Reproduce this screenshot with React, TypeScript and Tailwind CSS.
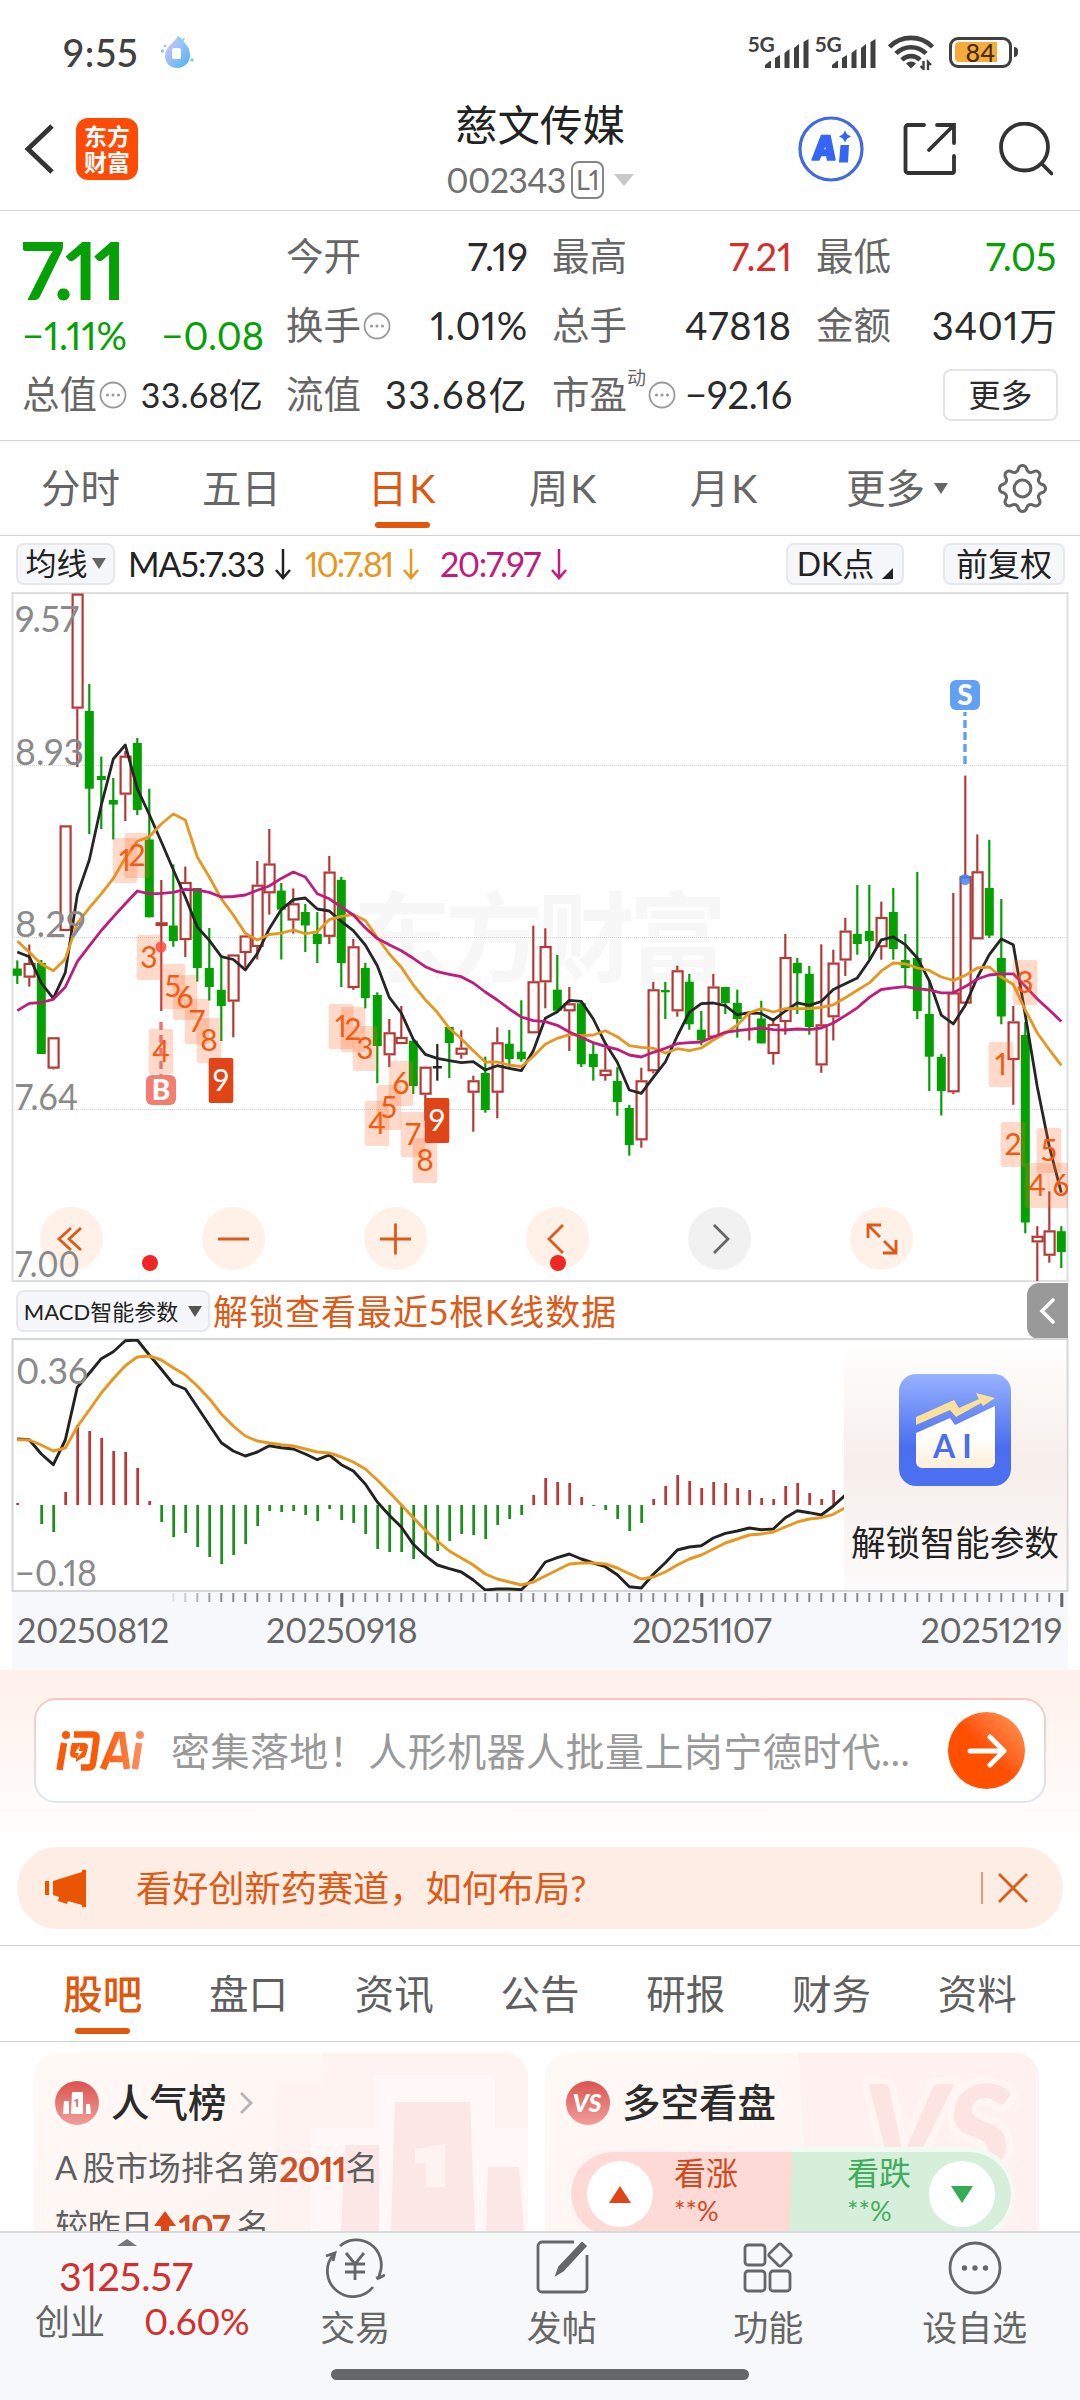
import type { ReactNode } from "react";
import { BsGear } from "react-icons/bs";

type Kind = "R" | "G" | "B";
// high, body top, body bottom, low, kind
type Candle = [number, number, number, number, Kind];

const candles: Candle[] = [
  [960.4, 968.5, 975.8, 984, "G"],
  [944.5, 963, 977.6, 986.6, "R"],
  [960, 963, 1054, 1054, "G"],
  [1037.3, 1037.3, 1068.6, 1069.5, "R"],
  [825.4, 825.4, 931, 931, "R"],
  [593.6, 593.6, 708.6, 767, "R"],
  [684, 711, 788.7, 834, "G"],
  [756.6, 776, 780, 829, "G"],
  [778, 800, 804.6, 839.5, "G"],
  [751, 755.7, 794.6, 821, "R"],
  [738, 743, 810, 815, "G"],
  [788.7, 839.5, 917.3, 917.3, "G"],
  [880, 922.3, 926, 1011, "R"],
  [864.4, 925.5, 941, 946.8, "G"],
  [866.6, 882, 940, 957, "R"],
  [888, 888, 968, 981.6, "G"],
  [928, 968, 987, 1000.6, "G"],
  [958, 989.8, 1006, 1041, "G"],
  [954.5, 954.5, 1001.6, 1037.3, "R"],
  [935.5, 935.5, 953, 967, "R"],
  [861, 884.7, 947, 959.5, "R"],
  [829, 863.5, 893.3, 914.6, "R"],
  [883, 890.6, 909.6, 959.5, "G"],
  [888.4, 903.3, 920.5, 933.6, "R"],
  [904, 912, 925.5, 952, "G"],
  [912, 934, 944, 963, "G"],
  [856, 871.6, 936.8, 944, "R"],
  [877, 879.8, 963, 987, "G"],
  [939, 946.3, 988, 989.8, "R"],
  [963, 968, 998, 1008.3, "G"],
  [992.3, 995, 1046, 1083.3, "G"],
  [1019, 1032.3, 1055.3, 1067, "R"],
  [1006, 1037, 1044, 1044, "R"],
  [1040.7, 1040.7, 1086, 1094, "G"],
  [1066.7, 1066.7, 1094.7, 1120.7, "R"],
  [1044, 1066, 1068.5, 1080.7, "B"],
  [1027, 1027, 1043, 1078, "G"],
  [1030.3, 1047.7, 1054.7, 1058.7, "R"],
  [1075.7, 1080.3, 1092.7, 1131.7, "R"],
  [1056.7, 1073, 1110, 1112.7, "G"],
  [1027.3, 1042.3, 1092.7, 1118.3, "R"],
  [1030, 1043.7, 1059, 1066.7, "G"],
  [1000.3, 1051.7, 1059.3, 1061.7, "G"],
  [925.7, 981.3, 1033.3, 1033.3, "R"],
  [928.3, 946, 982.3, 1008.3, "R"],
  [955, 989.7, 1010.7, 1013.3, "G"],
  [987, 1003.3, 1011.3, 1051, "R"],
  [1001.7, 1003.3, 1064.3, 1067, "G"],
  [1043, 1054, 1067, 1080.7, "G"],
  [1048, 1069.7, 1076, 1080.7, "R"],
  [1067.3, 1081, 1102, 1115.7, "G"],
  [1105, 1108, 1145, 1155.7, "G"],
  [1067.7, 1080.3, 1140.3, 1147.7, "R"],
  [982, 989.3, 1071.3, 1073.3, "R"],
  [982, 990, 992.3, 1019, "G"],
  [965.7, 970.3, 1011.3, 1016.7, "R"],
  [974, 981.7, 1024.3, 1029.7, "G"],
  [1011, 1029.7, 1040.3, 1045.3, "G"],
  [974, 986.5, 1037.6, 1037.6, "R"],
  [987, 987, 1003, 1014, "G"],
  [989.7, 1003, 1019, 1037.7, "G"],
  [1013, 1012, 1014, 1040.5, "R"],
  [1000.7, 1018.5, 1043.4, 1043.4, "G"],
  [1020, 1024, 1054, 1064.6, "R"],
  [934, 957, 1022, 1034.7, "R"],
  [958, 963, 973.3, 1014, "G"],
  [966, 973.8, 1027, 1034.7, "G"],
  [944.3, 1024.3, 1065.4, 1072.8, "R"],
  [949.7, 962.6, 1017.3, 1040.5, "R"],
  [917.8, 930.6, 960.5, 976, "R"],
  [885, 934, 944, 954.7, "G"],
  [885, 931, 941, 959.7, "G"],
  [901.6, 917, 947.2, 959.7, "R"],
  [888, 912, 949, 959.7, "G"],
  [934, 960, 968, 986.6, "G"],
  [872, 958, 1011, 1019, "G"],
  [981, 1014, 1056.7, 1091, "G"],
  [1054, 1057, 1091, 1115.5, "G"],
  [893, 992.4, 1092.3, 1094, "R"],
  [775.6, 876.3, 1003.6, 1003.6, "R"],
  [834.4, 871.3, 939.3, 939.3, "R"],
  [839.8, 888, 935.6, 938, "G"],
  [899, 958, 1016.5, 1024.3, "G"],
  [1006, 1021.4, 1060, 1104.8, "R"],
  [1022, 1035, 1222.5, 1233.3, "G"],
  [1226.2, 1235.8, 1242.4, 1282, "R"],
  [1191.4, 1230.4, 1255.7, 1262.7, "R"],
  [1226.2, 1231.2, 1252, 1268, "G"],
];

const ma5 = [
  952, 956.7, 983, 998.4, 972.6, 894.7, 860, 805, 759, 745, 788.7, 814.5, 841.7, 869.8, 897, 927, 940.4, 956.7, 959.5,
  969.9, 953.6, 928.7, 909.6, 899.7, 898, 909, 911, 921.4, 930.6, 945, 965.7, 997.4, 1013, 1039.3, 1054.3, 1058.3,
  1060.7, 1062.7, 1061.7, 1070, 1065.7, 1068.3, 1070.7, 1050.7, 1018.3, 1011.7, 1000.3, 1001.3, 1019, 1043.3, 1062.3,
  1090, 1093.3, 1077.3, 1062, 1036, 1012.3, 1003.7, 1003, 1005.7, 1014.8, 1012.7, 1013.6, 1020.2, 1011, 1002.8, 1005.3,
  1001.5, 989.5, 983.7, 977.9, 960.5, 939.8, 936.9, 944.7, 958, 980.8, 1015.2, 1023.9, 1005.3, 977.5, 954.7, 938.9,
  944.7, 1015, 1087, 1146.6, 1192.7,
];
const ma10 = [
  940.9, 952.2, 964, 970.8, 959, 923.2, 907.8, 893.8, 878.4, 858, 841.3, 836.7, 824, 814, 820, 857, 877, 898.8, 915,
  933.2, 940, 934.5, 933.2, 930, 933.6, 931.8, 919.6, 916.4, 914.6, 920.5, 937.5, 954, 967.3, 985, 999.7, 1012.3,
  1028.3, 1038.7, 1050.7, 1062, 1062, 1065, 1066.7, 1056.3, 1044.3, 1038.3, 1034.7, 1035.7, 1035, 1030.7, 1036.7,
  1045.7, 1047.3, 1048.3, 1053, 1048.7, 1050.7, 1048, 1040, 1033.3, 1025, 1012.7, 1008.6, 1012, 1008.6, 1008.6, 1008.6,
  1007.3, 1004.8, 997.8, 990.3, 982.9, 970.9, 963, 963.8, 968, 970.4, 977, 980.4, 975.4, 968, 967, 977, 984.5, 1010,
  1033, 1049.6, 1065.4,
];
const ma20 = [
  1010.6, 1003.4, 1002.5, 999.3, 987, 961.7, 945.9, 930.5, 916.9, 903.8, 891, 893.8, 893.3, 892.4, 889.3, 890.2, 892.4,
  897, 896.5, 895, 890.2, 886, 878.4, 872, 877, 893.8, 898.8, 907, 915, 927.8, 938.6, 944.7, 950.7, 958.3, 966.7, 971.7,
  974.3, 976.7, 983, 992, 1000, 1009, 1017, 1020.7, 1021.7, 1025.3, 1032, 1037.3, 1042.7, 1046.3, 1049.3, 1055, 1057,
  1052.3, 1048.3, 1043.7, 1042.7, 1042, 1037, 1032.3, 1030.7, 1029.3, 1028, 1029.7, 1030, 1029, 1029.7, 1028, 1023,
  1015.6, 1007.8, 997.4, 989.5, 987.9, 986.6, 988.7, 990, 992.8, 992.8, 986.6, 979, 975, 973.8, 973.8, 986.2, 999, 1010,
  1021.4,
];

const macd = [
  2, 0, -19, -27, 13, 80, 74, 67, 54, 53, 37, 4, -17, -32, -28, -42, -52, -59, -50, -39, -21, -6, -7, -6, -10, -16, -4,
  -15, -18, -29, -44, -47, -47, -54, -51, -46, -36, -29, -30, -34, -20, -14, -10, 10, 27, 23, 22, 8, -1, -5, -14, -26,
  -18, 6, 19, 30, 24, 17, 23, 22, 17, 15, 7, 6, 19, 22, 12, 6, 15,
];
const dif = [
  1439, 1439.7, 1454, 1464.7, 1440, 1387.3, 1373.3, 1358.7, 1351.7, 1340.7, 1340, 1355, 1369.3, 1384, 1389, 1407, 1425,
  1442.7, 1451, 1456, 1452, 1445.7, 1447.7, 1449, 1454, 1459.7, 1455, 1464.7, 1471, 1484, 1502, 1515.3, 1527, 1544.3,
  1555.7, 1565, 1568.7, 1572, 1580, 1590, 1589, 1589, 1589.7, 1578.3, 1562, 1557.7, 1554, 1559, 1563, 1566.7, 1574.7,
  1586.7, 1588, 1574.3, 1562.7, 1550, 1547, 1545.7, 1538, 1533.3, 1531, 1528, 1529.7, 1529, 1517.7, 1510.7, 1512.7, 1515,
  1506, 1495,
];
const dea = [
  1439.7, 1440, 1445, 1451, 1448, 1426.7, 1410, 1393, 1378.7, 1365.7, 1357, 1356, 1360, 1367.7, 1375, 1386, 1398.7, 1414,
  1426, 1436, 1441, 1443, 1444.7, 1446, 1449, 1452, 1453, 1457, 1462, 1469, 1480, 1492.3, 1504.7, 1517.7, 1530.3, 1541,
  1551, 1558, 1565, 1574, 1579, 1582, 1585, 1582, 1576, 1570, 1564, 1563, 1563, 1564, 1568, 1573.7, 1579, 1577, 1572,
  1565, 1559, 1555, 1549, 1543, 1539, 1535, 1534, 1532, 1527, 1522, 1519, 1517.7, 1514.3, 1507.7,
];

// label, centre x, top
const signals: [string, number, number][] = [
  ["1", 125, 838],
  ["2", 137, 833],
  ["3", 149, 935],
  ["4", 161, 1029],
  ["5", 173, 964],
  ["6", 185, 975],
  ["7", 197, 999],
  ["8", 209, 1018],
  ["9", 221, 1058],
  ["1", 341, 1004],
  ["2", 353, 1007],
  ["3", 365, 1026],
  ["4", 377, 1101],
  ["5", 389, 1085],
  ["6", 401, 1061],
  ["7", 413, 1112],
  ["8", 425, 1138],
  ["9", 437, 1098],
  ["1", 1001, 1042],
  ["2", 1013, 1122],
  ["3", 1025, 960],
  ["4", 1037, 1163],
  ["5", 1049, 1128],
  ["6", 1061, 1163],
];

const xOf = (i: number) => 17.3 + i * 12;
const toPoints = (values: number[]) => values.map((y, i) => `${xOf(i)},${y}`).join(" ");

const colorOf: Record<Kind, string> = { R: "#b53a36", G: "#04a004", B: "#222222" };

const CandleShape = ({ index, candle }: { index: number; candle: Candle }) => {
  const [high, top, bottom, low, kind] = candle;
  const x = xOf(index);
  const color = colorOf[kind];
  if (kind === "R") {
    return (
      <g stroke={color} strokeWidth={2.2}>
        {high < top && <line x1={x} x2={x} y1={high} y2={top} />}
        {low > bottom && <line x1={x} x2={x} y1={bottom} y2={low} />}
        <rect
          x={x - 4.7}
          y={top + 1}
          width={10}
          height={Math.max(bottom - top - 2, 0.5)}
          fill={bottom - top > 4 ? "#fff" : color}
        />
      </g>
    );
  }
  return (
    <g fill={color}>
      <rect x={x - 1.1} y={high} width={2.2} height={low - high} />
      <rect x={x - 4.5} y={top} width={9} height={bottom - top} />
    </g>
  );
};

const KLineChart = () => (
  <svg viewBox="0 590 1080 694" className="relative block w-full h-full font-[Lato]">
    <defs>
      <clipPath id="kline">
        <rect x="12" y="593" width="1056" height="688" />
      </clipPath>
    </defs>
    <rect x="12.5" y="593" width="1055" height="688" fill="none" stroke="#dedfe0" strokeWidth="2" />
    <text
      x="353"
      y="974"
      fontSize="98"
      fontWeight="700"
      fill="#f7f7f7"
      textLength="374"
      className="font-['Noto_Sans_CJK_SC',sans-serif]"
    >
      东方财富
    </text>
    {[765.5, 937.5, 1109.5].map((y) => (
      <line key={y} x1="12" x2="1068" y1={y} y2={y} stroke="#d4d4d4" strokeDasharray="1 1" />
    ))}
    <g clipPath="url(#kline)">
      {candles.map((c, i) => (
        <CandleShape key={i} index={i} candle={c} />
      ))}
      <g fill="none" strokeWidth="2.8" strokeLinejoin="round">
        <polyline points={toPoints(ma5)} stroke="#262626" />
        <polyline points={toPoints(ma10)} stroke="#e8971e" />
        <polyline points={toPoints(ma20)} stroke="#c01c7c" />
      </g>
      {signals.map(([label, cx, top], i) => {
        const solid = label === "9";
        return (
          <g key={i}>
            <rect
              x={cx - 12.3}
              y={top}
              width="24.6"
              height="45"
              rx="2"
              fill={solid ? "#e04518" : "#ff6a2a"}
              fillOpacity={solid ? 1 : 0.25}
            />
            <text x={cx} y={top + 33} fontSize="30" textAnchor="middle" fill={solid ? "#fff" : "#ef5b10"}>
              {label}
            </text>
          </g>
        );
      })}
    </g>
    <g fill="#8a8a8a" fontSize="36">
      <text x="15" y="632" textLength="64" lengthAdjust="spacingAndGlyphs">9.57</text>
      <text x="15" y="765" textLength="69" lengthAdjust="spacingAndGlyphs">8.93</text>
      <text x="15" y="937" textLength="71" lengthAdjust="spacingAndGlyphs">8.29</text>
      <text x="15" y="1110" textLength="63" lengthAdjust="spacingAndGlyphs">7.64</text>
      <text x="15" y="1277" textLength="65" lengthAdjust="spacingAndGlyphs">7.00</text>
    </g>
    <circle cx="161" cy="947" r="5.5" fill="#ff4b3a" fillOpacity="0.85" />
    <line x1="161" x2="161" y1="1022" y2="1075" stroke="#ee7367" strokeWidth="3.4" strokeDasharray="8 5" />
    <rect x="146" y="1075" width="30" height="30" rx="6" fill="#f57d70" />
    <text x="161" y="1100" fontSize="28" fontWeight="900" fill="#fff" textAnchor="middle">B</text>
    <circle cx="965" cy="879.5" r="5.5" fill="#3f82f2" fillOpacity="0.85" />
    <line x1="965" x2="965" y1="712" y2="764" stroke="#62a0f5" strokeWidth="3.4" strokeDasharray="8 4" strokeDashoffset="4" />
    <rect x="950" y="680" width="30" height="30" rx="6" fill="#62a0f5" />
    <text x="965" y="705" fontSize="28" fontWeight="900" fill="#fff" textAnchor="middle">S</text>
  </svg>
);

const MacdChart = () => (
  <svg viewBox="0 1338 1080 254" className="block w-full h-full font-[Lato]">
    <defs>
      <clipPath id="macd">
        <rect x="12" y="1339" width="832" height="252" />
      </clipPath>
    </defs>
    <rect x="12.5" y="1339" width="1055" height="252" fill="#fff" stroke="#d5d6d7" strokeWidth="2" />
    <g clipPath="url(#macd)">
      {macd.map((v, i) => (
        <rect
          key={i}
          x={xOf(i) - 1}
          y={v > 0 ? 1505 - v : 1505}
          width="2.8"
          height={Math.abs(v)}
          fill={v > 0 ? "#b53a3a" : "#1f8f1f"}
        />
      ))}
      <g fill="none" strokeWidth="2.9" strokeLinejoin="round">
        <polyline points={toPoints(dif)} stroke="#222" />
        <polyline points={toPoints(dea)} stroke="#e8971e" />
      </g>
    </g>
    <g fill="#8a8a8a" fontSize="37">
      <text x="16" y="1384" textLength="72" lengthAdjust="spacingAndGlyphs">0.36</text>
      <text x="15" y="1586" textLength="82" lengthAdjust="spacingAndGlyphs">−0.18</text>
    </g>
  </svg>
);

const MoreDots = () => (
  <svg viewBox="0 0 28 28" className="size-7 shrink-0 ml-0.5" fill="none" stroke="#9a9a9a" strokeWidth="1.8">
    <circle cx="14" cy="14" r="12.5" />
    <g fill="#9a9a9a" stroke="none">
      <circle cx="8.5" cy="14" r="1.6" />
      <circle cx="14" cy="14" r="1.6" />
      <circle cx="19.5" cy="14" r="1.6" />
    </g>
  </svg>
);

const Signal = () => (
  <div className="relative w-[61px] h-[34px]">
    <span className="absolute left-0 top-0 text-[21px] leading-[17px] font-bold tracking-[0px]">5G</span>
    <svg viewBox="0 0 61 34" className="w-full h-full" fill="#404040">
      <path d="M17 33v-3l5-4h1v7zM27 33V23l5-3v13zM36.500 33V18l5-4v19zM46 33V13l5-4v24zM55.500 33V7l5-3v29z" />
    </svg>
  </div>
);

const StatusBar = () => (
  <div className="flex items-center h-[104px] pl-[63px] pr-[62px] text-[#404040]">
    <span className="text-[38px] font-medium tracking-[1px]">9:55</span>
    <svg viewBox="0 0 36 36" className="size-9 ml-5">
      <defs>
        <linearGradient id="drop" x1="0" y1="0" x2="1" y2="1">
          <stop offset="0" stopColor="#e3c8f6" />
          <stop offset="1" stopColor="#48b4f5" />
        </linearGradient>
      </defs>
      <path d="M19 2c4 5 12 9 12 19 0 8-6 13-13 13S6 29 6 22C6 13 15 9 19 2z" fill="url(#drop)" />
      <rect x="13" y="14" width="9" height="11" rx="2" fill="#fff" />
      <circle cx="3.500" cy="17" r="1.800" fill="#8ec6f7" />
      <circle cx="6" cy="12" r="1.300" fill="#8ec6f7" />
      <circle cx="33" cy="26" r="1.800" fill="#8ec6f7" />
      <path d="M19 3l5 5M25 4l-3 8" stroke="#7fd0fa" strokeWidth="2" />
    </svg>
    <div className="flex items-center ml-auto">
      <Signal />
      <div className="ml-1.5">
        <Signal />
      </div>
      <svg viewBox="0 0 46 36" className="w-[46px] h-9 ml-3" fill="none" stroke="#404040" strokeWidth="4.600">
        <path d="M1.500 13a30 30 0 0 1 43 0M8 19.500a21 21 0 0 1 30 0M14 26a12.500 12.500 0 0 1 18 0" />
        <path d="M23 34.500l-5-5a7 7 0 0 1 10 0z" fill="#404040" stroke="none" />
        <path d="M35.500 27v8l-3-3M40 36v-8l3 3" strokeWidth="2.400" />
      </svg>
      <div className="flex items-center ml-[15px]">
        <div className="w-[63px] h-[31px] rounded-[9px] border-[3px] border-[#404040] p-[2.500px]">
          <div className="relative h-full w-[42px] rounded-l-[4px] bg-[#f4ad3c]">
            <span className="absolute left-[11px] top-[-3px] text-[25px] leading-[26px] font-medium text-[#4a2d08]">84</span>
          </div>
        </div>
        <div className="w-[4px] h-[10px] ml-[2px] rounded-r-sm bg-[#404040]" />
      </div>
    </div>
  </div>
);

const Header = () => (
  <div className="relative h-[107px] border-b border-[#d4d4d4]">
    <div className="flex items-center h-[90px] pl-6">
      <svg viewBox="0 0 32 50" className="w-8 h-[50px]" fill="none" stroke="#333" strokeWidth="4.800">
        <path d="M28 2L4 25l24 23" />
      </svg>
      <div className="flex flex-col items-center justify-center ml-5 size-[62px] rounded-xl bg-[#ff4b05] text-white text-[23px] leading-[26px] font-bold">
        <span>东方</span>
        <span>财富</span>
      </div>
      <svg viewBox="0 0 66 66" className="size-[66px] ml-auto mr-[39px]">
        <circle cx="33" cy="33" r="31" fill="none" stroke="#4169e1" strokeWidth="3.200" />
        <path
          d="M14 44L23.500 19.500h8.500L37 44h-7.500l-.7-4.500h-6L21 44zM25 34h3.600l-.9-6z"
          fill="#3366f6"
          stroke="#3366f6"
          strokeWidth="1.500"
          strokeLinejoin="round"
        />
        <path d="M42.500 29h8.500l-1 17.500h-9zM47 14.500l2 3.800 4 2.200-4 2.200-2 3.800-2-3.800-4-2.200 4-2.200z" fill="#3366f6" />
      </svg>
      <svg viewBox="0 0 54 54" className="size-[54px] mr-[42px]" fill="none" stroke="#333" strokeWidth="3.800" strokeLinecap="round">
        <path d="M21 3H5a2.500 2.500 0 0 0-2.500 2.500v43A2.500 2.500 0 0 0 5 51h44a2 2 0 0 0 2-2V34M34 3h17v18M51 3L26 28" />
      </svg>
      <svg viewBox="0 0 54 54" className="size-[54px] mr-[27px]" fill="none" stroke="#333" strokeWidth="3.800" strokeLinecap="round">
        <circle cx="25.500" cy="25" r="23.500" />
        <path d="M43 42l9.500 9.500" />
      </svg>
    </div>
    <div className="absolute left-[440px] -top-0.5 w-[200px] flex flex-col items-center">
      <h1 className="text-[42.500px] leading-[46px] text-[#222] whitespace-nowrap">慈文传媒</h1>
      <div className="flex items-center mt-[8px] text-[#707070]">
        <span className="text-[34px] leading-[48px] tracking-[-0.700px]">002343</span>
        <span className="ml-[5px] w-[33px] h-[38px] rounded-lg border-2 border-[#858585] text-[27px] leading-[33px] text-center tracking-[-1px]">
          L1
        </span>
        <span className="ml-2.5 border-x-[10px] border-x-transparent border-t-[12px] border-t-[#c8c8c8]" />
      </div>
    </div>
  </div>
);

interface FieldProps {
  label: string;
  value: string;
  color?: string;
  tracking?: string;
  size?: string;
  extra?: ReactNode;
}

const Field = ({ label, value, color = "text-[#2b2b2b]", tracking = "", size = "text-[38px]", extra }: FieldProps) => (
  <div className="flex items-center h-[69px] whitespace-nowrap">
    <span className="-ml-0.5 text-[37.500px] text-[#666]">{label}</span>
    {extra}
    <span className={`ml-auto ${size} ${color} ${tracking}`}>{value}</span>
  </div>
);

const Quote = () => (
  <div className="flex gap-[26px] h-[230px] pt-[11px] pl-6 pr-6 border-b border-[#d4d4d4]">
    <div className="w-[238px] text-[#04a004]">
      <div className="-ml-[3px] h-[88px] text-[80px] leading-[94px] font-bold tracking-[-4.500px]">7.11</div>
      <div className="flex justify-between h-[50px] items-center text-[38px] -ml-0.5 -mr-0.5">
        <span>−1.11%</span>
        <span>−0.08</span>
      </div>
      <Field
        label="总值"
        value="33.68亿"
        size="text-[34px]"
        tracking="tracking-[0.300px] -mr-px"
        extra={<MoreDots />}
      />
    </div>
    <div className="w-[240px]">
      <Field label="今开" value="7.19" />
      <Field label="换手" value="1.01%" tracking="tracking-[0.700px]" extra={<MoreDots />} />
      <Field label="流值" value="33.68亿" tracking="tracking-[1.400px]" />
    </div>
    <div className="w-[238px]">
      <Field label="最高" value="7.21" color="text-[#d32f2f]" />
      <Field label="总手" value="47818" tracking="tracking-[1px]" />
      <Field
        label="市盈"
        value="−92.16"
        tracking="tracking-[-0.200px]"
        extra={
          <>
            <span className="self-start text-[19px] leading-[19px] text-[#666] mt-2">动</span>
            <MoreDots />
          </>
        }
      />
    </div>
    <div className="flex-1">
      <Field label="最低" value="7.05" color="text-[#04a004]" tracking="tracking-[-0.300px]" />
      <Field label="金额" value="3401万" tracking="tracking-[0.700px] -mr-[2px]" />
      <div className="flex items-center justify-end h-[69px]">
        <button className="-mr-[2px] w-[115px] h-[52px] rounded-lg border-2 border-[#e4e4e6] text-[32px] leading-[46px] text-[#2b2b2b]">
          更多
        </button>
      </div>
    </div>
  </div>
);

const periods = ["分时", "五日", "日K", "周K", "月K", "更多"];

const PeriodTabs = () => (
  <div className="flex items-center h-[95px] border-b border-[#d4d4d4] text-[39.500px] text-[#666]">
    {periods.map((p) => (
      <div key={p} className="relative flex items-center justify-center w-[161px] h-full">
        <span className={p === "日K" ? "text-[#e2570b] tracking-[2px]" : p.endsWith("K") ? "tracking-[2px]" : ""}>{p}</span>
        {p === "更多" && (
          <span className="absolute right-[18px] border-x-[7px] border-x-transparent border-t-[11px] border-t-[#666]" />
        )}
        {p === "日K" && <span className="absolute left-[53px] bottom-[7px] w-[55px] h-[6px] rounded-full bg-[#e2570b]" />}
      </div>
    ))}
    <BsGear className="ml-[32px] size-[49px] text-[#666]" />
  </div>
);

const Chip = ({ className, children }: { className: string; children: ReactNode }) => (
  <div className={`flex items-center justify-center h-[42px] rounded-lg border-2 border-[#e6e8ec] bg-[#f6f7fa] text-[#222] ${className}`}>
    {children}
  </div>
);

const DownArrow = () => (
  <svg viewBox="0 0 18 32" className="w-[18px] h-8 ml-2.5" fill="none" stroke="currentColor" strokeWidth="2.500">
    <path d="M9 1v28M2 22l7 8 7-8" />
  </svg>
);

const MaRow = () => (
  <div className="flex items-center h-[54px] pt-px pl-4 pr-[15px] text-[34px]">
    <Chip className="w-[99px] text-[31px]">
      均线
      <span className="ml-1 border-x-[7px] border-x-transparent border-t-[11px] border-t-[#666]" />
    </Chip>
    <div className="flex items-center ml-[13px] w-[177px] text-[#222]">
      <span className="tracking-[-1px]">MA5:7.33</span>
      <DownArrow />
    </div>
    <div className="flex items-center w-[135px] text-[#e8971e]">
      <span className="tracking-[-2px]">10:7.81</span>
      <DownArrow />
    </div>
    <div className="flex items-center text-[#c01c7c]">
      <span className="tracking-[-1.400px]">20:7.97</span>
      <DownArrow />
    </div>
    <Chip className="ml-auto w-[118px] text-[32px]">
      DK点
      <span className="ml-2 mt-5 border-l-[11px] border-l-transparent border-b-[11px] border-b-[#222]" />
    </Chip>
    <Chip className="ml-[39px] w-[122px] text-[32px]">前复权</Chip>
  </div>
);

const tools: { d: string; gray?: boolean }[] = [
  { d: "M31 21L19 32l12 11M41 21L29 32l12 11" },
  { d: "M16 32h31" },
  { d: "M16 32h31M31.500 16.500v31" },
  { d: "M37 18L23 32l14 14" },
  { d: "M26 18l14 14-14 14", gray: true },
  { d: "M18 31V18h13M18 18l12 12M46 33v13H33M46 46L34 34" },
];

const ChartTools = () => (
  <div className="absolute left-10 top-[617px] flex gap-[99px]">
    {tools.map((t, i) => (
      <svg
        key={i}
        viewBox="0 0 63 63"
        className={`size-[63px] rounded-full ${t.gray ? "bg-[#ededed]/80" : "bg-[#ffede2]/80"}`}
        fill="none"
        stroke={t.gray ? "#666" : "#dd5a17"}
        strokeWidth="2.800"
      >
        <path d={t.d} />
      </svg>
    ))}
    <span className="absolute left-[102px] top-[48px] size-4 rounded-full bg-[#ee2724]" />
    <span className="absolute left-[510px] top-[48px] size-4 rounded-full bg-[#ee2724]" />
  </div>
);

const MacdRow = () => (
  <div className="relative flex items-center h-[54px] pl-4">
    <Chip className="w-[194px] text-[22px]">
      MACD智能参数
      <span className="ml-2.5 border-x-[7px] border-x-transparent border-t-[11px] border-t-[#555]" />
    </Chip>
    <span className="ml-[3px] text-[35px] leading-[50px] tracking-[1px] text-[#dd5a17]">解锁查看最近5根K线数据</span>
    <div className="absolute right-3 -top-px flex items-center justify-center w-[41px] h-[56px] rounded-l-xl bg-[#999]">
      <svg viewBox="0 0 20 28" className="w-5 h-7" fill="none" stroke="#fff" strokeWidth="3.600" strokeLinecap="round">
        <path d="M15 3L4 14l11 11" />
      </svg>
    </div>
  </div>
);

const AiPromo = () => (
  <div className="absolute left-[844px] top-[2px] flex flex-col items-center w-[222px] h-[250px] pt-[34px] bg-linear-to-b from-white via-[#f6eeea] to-[#fcfbfb]">
    <svg viewBox="0 0 112 112" className="size-[112px]">
      <defs>
        <linearGradient id="promo" x1="0" y1="0" x2="0" y2="1">
          <stop offset="0" stopColor="#97b2ff" />
          <stop offset="0.650" stopColor="#4a6eef" />
          <stop offset="1" stopColor="#4c70f2" />
        </linearGradient>
        <linearGradient id="card" x1="0" y1="0" x2="0" y2="1">
          <stop offset="0.500" stopColor="#fff" />
          <stop offset="1" stopColor="#fdeed6" />
        </linearGradient>
      </defs>
      <rect width="112" height="112" rx="17" fill="url(#promo)" />
      <path d="M17 59l34-15 5 7 40-19v56a6 6 0 0 1-6 6H23a6 6 0 0 1-6-6z" fill="url(#card)" />
      <path d="M17 43l38-17 5 8 20-9-3-6 19 5-12 8-2-3-25 14-6-7-34 15z" fill="#fbe09a" />
      <text x="34" y="84" fontSize="32" fontWeight="700" fill="#4a6eef" letterSpacing="7">AI</text>
    </svg>
    <span className="mt-[32px] text-[34.700px] leading-[50px] text-[#222] whitespace-nowrap">解锁智能参数</span>
  </div>
);

const TimeAxis = () => (
  <div className="mx-3 h-[78px] bg-[#f7f8fb] text-[34px] text-[#666]">
    <svg viewBox="0 0 1056 16" className="block w-full h-4">
      {Array.from({ length: 75 }, (_, k) => k + 13).map((i) => {
        const major = i === 27 || i === 57 || i === 87;
        return (
          <rect
            key={i}
            x={xOf(i) - 13}
            y="1"
            width={major ? 3 : 2}
            height={major ? 14 : 9}
            fill={major ? "#666" : "#8a8a8a"}
            opacity={Math.min(1, (i - 12) / 5)}
          />
        );
      })}
    </svg>
    <div className="relative flex h-[42px] items-center">
      <span className="absolute left-[5px] tracking-[-0.300px]">20250812</span>
      <span className="absolute left-[254px] tracking-[-0.300px]">20250918</span>
      <span className="absolute left-[620px] tracking-[-0.900px]">20251107</span>
      <span className="absolute right-[6px] tracking-[-0.300px]">20251219</span>
    </div>
  </div>
);

const AskAi = () => (
  <div className="h-[177px] pt-7 px-[34px] bg-linear-to-b from-[#fff0ea] to-white">
    <div className="rounded-[22px] p-[2px] bg-linear-to-b from-[#f5c9bf] to-[#dfe6f0]">
      <div className="flex items-center h-[101px] pl-5 pr-[19px] rounded-[20px] bg-white">
        <svg viewBox="0 0 90 42" className="w-[90px] h-[42px]">
          <defs>
            <linearGradient id="ask" gradientUnits="userSpaceOnUse" x1="0" y1="0" x2="90" y2="0">
              <stop offset="0.500" stopColor="#f95a08" />
              <stop offset="1" stopColor="#ff9265" />
            </linearGradient>
          </defs>
          <g fill="none" stroke="url(#ask)" strokeWidth="6.500">
            <path d="M8 13L3.500 40M18 4.500h19q4 0 3.500 4l-3.500 25q-.5 4-5 4h-7" />
            <path d="M47 39L61 5h5l5 34M54 29h13M83 13l-4 26" />
          </g>
          <g fill="url(#ask)">
            <circle cx="10" cy="5" r="4" />
            <circle cx="84" cy="5" r="4" />
            <path d="M16 13h12q4 0 4 4l-2 8q-1 3-4 3l-6 4v-4q-6 0-6-4l1-8q1-3 1-3z" />
          </g>
          <path d="M24 15l-5 8h4l-2 5 6-7h-4z" fill="#fff" />
        </svg>
        <span className="ml-[25px] flex-1 text-[39px] leading-[56px] tracking-[0.450px] text-[#999] whitespace-nowrap">
          密集落地！人形机器人批量上岗宁德时代...
        </span>
        <div className="flex items-center justify-center size-[77px] rounded-full bg-linear-to-tr from-[#ff5000] from-50% to-[#ff9a52]">
          <svg viewBox="0 0 40 36" className="w-10 h-9" fill="none" stroke="#fff" strokeWidth="5" strokeLinecap="round" strokeLinejoin="round">
            <path d="M3 18h33M23 4l14 14-14 14" />
          </svg>
        </div>
      </div>
    </div>
  </div>
);

const Banner = () => (
  <div className="flex items-center mx-[17px] h-[82px] pl-7 pr-[34px] rounded-full bg-[#fdede4] text-[#dd5a17]">
    <svg viewBox="0 0 42 37" className="w-[42px] h-[37px]" fill="#ea5504">
      <path d="M0 11h4v14H0zM8 11L37 2V0h4v37h-4v-2l-14-4-1 3-9-3 1-4-6-2z" />
    </svg>
    <span className="ml-[49px] text-[36.200px]">看好创新药赛道，如何布局?</span>
    <span className="ml-auto w-[2px] h-8 bg-[#e79a73]" />
    <svg viewBox="0 0 32 32" className="size-8 ml-[14px]" fill="none" stroke="#dd5a17" strokeWidth="2.800">
      <path d="M2 2l28 28M30 2L2 30" />
    </svg>
  </div>
);

const sections = ["股吧", "盘口", "资讯", "公告", "研报", "财务", "资料"];

const SectionTabs = () => (
  <div className="flex mt-4 h-[97px] px-[30px] border-y border-[#d4d4d4] text-[39.500px] text-[#5f5f5f]">
    {sections.map((s, i) => (
      <div key={s} className="relative flex flex-1 items-center justify-center">
        <span className={i === 0 ? "text-[#e2570b] font-medium" : ""}>{s}</span>
        {i === 0 && <span className="absolute bottom-[7px] w-[55px] h-[6px] rounded-full bg-[#e2570b]" />}
      </div>
    ))}
  </div>
);

const RankCard = () => (
  <div className="relative w-[494px] h-[300px] pl-[21px] pt-7 rounded-[24px] overflow-hidden bg-linear-to-br from-[#fff9f6] to-[#fdf1ef]">
    <svg viewBox="0 0 494 178" className="absolute left-0 top-0 w-[494px] h-[178px]">
      <path d="M242 29h46V0h206v178H242z" fill="#fef3f1" />
      <path d="M276 75h64V22h121v53h33v103H276z" fill="#fff8f6" />
      <path d="M311 92h34v86h-38zM361 49h75l5 129h-84zM454 114h31l5 64h-38z" fill="#fbe7e5" />
      <path d="M381 96l30-5v43h-19v-24h-11z" fill="#fff3f1" />
    </svg>
    <div className="relative flex items-center h-11">
      <svg viewBox="0 0 44 44" className="size-11">
        <defs>
          <linearGradient id="badge" x1="0" y1="0" x2="0" y2="1">
            <stop offset="0" stopColor="#d95450" />
            <stop offset="1" stopColor="#f29d99" />
          </linearGradient>
        </defs>
        <circle cx="22" cy="22" r="22" fill="url(#badge)" />
        <path d="M9 20h5v13H8zM17 11h11v22H16zM31 23h4l1 10h-5z" fill="#fff" />
        <text x="19" y="26" fontSize="12" fontWeight="900" fill="#e06a66">1</text>
      </svg>
      <span className="ml-[12px] text-[38.500px] font-medium text-[#2b2b2b]">人气榜</span>
      <svg viewBox="0 0 14 24" className="w-3.5 h-6 ml-[12px]" fill="none" stroke="#b5b5b5" strokeWidth="2.800">
        <path d="M2 2l10 10L2 22" />
      </svg>
    </div>
    <div className="relative mt-[21px] flex items-center h-11 text-[32.800px] text-[#5f5f5f] whitespace-nowrap">
      <span>
        A <span className="ml-[-2px]">股市场排名第</span>
      </span>
      <span className="font-bold text-[34px] text-[#cf5127] tracking-[-1px]">2011</span>
      <span>名</span>
    </div>
    <div className="relative mt-[14px] flex items-center h-11 text-[32.800px] text-[#5f5f5f] whitespace-nowrap">
      较昨日
      <svg viewBox="0 0 22 30" className="w-[22px] h-[30px] ml-px" fill="#e04518">
        <path d="M11 0l11 15h-7v15H7V15H0z" />
      </svg>
      <span className="ml-0.5 mr-2 font-bold text-[34px] text-[#cf5127] tracking-[-1.500px]">107</span>名
    </div>
  </div>
);

const VoteCard = () => (
  <div className="relative w-[494px] h-[300px] pl-[21px] pt-7 rounded-[24px] overflow-hidden bg-linear-to-br from-[#fff9f6] to-[#fdf1ef]">
    <svg viewBox="0 0 494 178" className="absolute left-0 top-0 w-[494px] h-[178px]">
      <path d="M254 0h240v178H264z" fill="#fef1ef" />
      <text x="318" y="124" fontSize="128" fontWeight="900" fontStyle="italic" fill="#fbe4e2" stroke="#fff6f4" strokeWidth="14" paintOrder="stroke" className="font-[Lato]">
        VS
      </text>
    </svg>
    <div className="relative flex items-center h-11">
      <svg viewBox="0 0 44 44" className="size-11">
        <circle cx="22" cy="22" r="22" fill="url(#badge)" />
        <text x="21" y="31" fontSize="25" fontWeight="900" fontStyle="italic" fill="#fff" textAnchor="middle" textLength="29" lengthAdjust="spacingAndGlyphs">
          VS
        </text>
      </svg>
      <span className="ml-[12px] text-[38.500px] font-medium text-[#2b2b2b]">多空看盘</span>
    </div>
    <div className="absolute left-[21px] top-[94px] flex w-[450px] h-[94px] rounded-full border-[5px] border-white/70 overflow-hidden bg-linear-[92deg] from-[#fddad6] from-50% to-[#d6efdb] to-50%">
      <div className="flex items-center w-1/2 pl-4">
        <div className="flex items-center justify-center size-[66px] rounded-full bg-white">
          <span className="border-x-[11px] border-x-transparent border-b-[17px] border-b-[#e04518]" />
        </div>
        <div className="flex flex-col ml-[21px] mb-2 text-[32px] leading-[42px] text-[#cf4a20]">
          <span>看涨</span>
          <span className="text-[27px] leading-[34px]">**%</span>
        </div>
      </div>
      <div className="flex items-center justify-end w-1/2 pr-4">
        <div className="flex flex-col mr-[18px] mb-2 text-[32px] leading-[42px] text-[#3fae5c]">
          <span>看跌</span>
          <span className="text-[27px] leading-[34px]">**%</span>
        </div>
        <div className="flex items-center justify-center size-[66px] rounded-full bg-white">
          <span className="border-x-[11px] border-x-transparent border-t-[17px] border-t-[#35ab55]" />
        </div>
      </div>
    </div>
  </div>
);

const navItems: { label: string; icon: ReactNode }[] = [
  {
    label: "交易",
    icon: (
      <>
        <path d="M15 8a25 25 0 0 1 40 27l-1 4M55 39l-4 1M48 49A25 25 0 0 1 8 17l1-2M1 18l9-3-2 8M52 41l8-4" />
        <path d="M21 15l9 11 9-11M20 26h20M20 34h20M30 26v16" />
      </>
    ),
  },
  {
    label: "发帖",
    icon: (
      <>
        <path d="M42 4H10a4 4 0 0 0-4 4v42a4 4 0 0 0 4 4h41a4 4 0 0 0 4-4V17" />
        <path d="M24 37l3-8L50 4.500l4 3.500-23 25z" fill="#666" strokeWidth="1.500" />
      </>
    ),
  },
  {
    label: "功能",
    icon: (
      <>
        <rect x="7" y="7" width="20" height="20" rx="3" />
        <rect x="7" y="33" width="20" height="20" rx="3" />
        <rect x="32" y="33" width="20" height="20" rx="3" />
        <path d="M40.500 6.500a2 2 0 0 1 3 0l9 9a2 2 0 0 1 0 3l-9 9a2 2 0 0 1-3 0l-9-9a2 2 0 0 1 0-3z" />
      </>
    ),
  },
  {
    label: "设自选",
    icon: (
      <>
        <circle cx="30" cy="30" r="25" />
        <g fill="#666" stroke="none">
          <circle cx="19.500" cy="30" r="2.700" />
          <circle cx="30" cy="30" r="2.700" />
          <circle cx="40.500" cy="30" r="2.700" />
        </g>
      </>
    ),
  },
];

const BottomNav = () => (
  <div className="absolute left-0 bottom-0 w-full h-[169px] border-t-2 border-[#d9dadc] bg-[#f7f8fa]">
    <div className="flex h-[128px]">
      <div className="w-[252px] pt-[6px] whitespace-nowrap">
        <div className="ml-[117px] w-0 border-x-[10px] border-x-transparent border-b-[7px] border-b-[#777]" />
        <div className="ml-[59px] mt-[4px] text-[39.500px] leading-[52px] text-[#d32f2f]">3125.57</div>
        <div className="flex items-center ml-[35px] mt-[-3px] h-[44px]">
          <span className="text-[35px] text-[#666]">创业</span>
          <span className="ml-[39px] text-[37px] text-[#d32f2f] tracking-[-0.500px]">0.60%</span>
        </div>
      </div>
      <div className="flex">
        {navItems.map((item) => (
          <div key={item.label} className="flex flex-col items-center w-[206.500px] pt-[5px]">
            <svg viewBox="0 0 60 60" className="size-[60px]" fill="none" stroke="#666" strokeWidth="2.800">
              {item.icon}
            </svg>
            <span className="mt-[4px] text-[35px] leading-[50px] text-[#666]">{item.label}</span>
          </div>
        ))}
      </div>
    </div>
    <div className="mx-auto mt-[8px] w-[418px] h-[11px] rounded-full bg-[#666]" />
  </div>
);

const App = () => {
  return (
    <div className="relative w-[1080px] h-[2400px] overflow-hidden bg-white font-[Lato,'Noto_Sans_CJK_SC',sans-serif] proportional-nums">
      <StatusBar />
      <Header />
      <Quote />
      <PeriodTabs />
      <MaRow />
      <div className="relative h-[694px]">
        <ChartTools />
        <KLineChart />
      </div>
      <MacdRow />
      <div className="relative h-[254px]">
        <MacdChart />
        <AiPromo />
      </div>
      <TimeAxis />
      <AskAi />
      <Banner />
      <SectionTabs />
      <div className="flex gap-[17px] pl-[34px] pt-[11px]">
        <RankCard />
        <VoteCard />
      </div>
      <BottomNav />
    </div>
  );
};

export default App;
